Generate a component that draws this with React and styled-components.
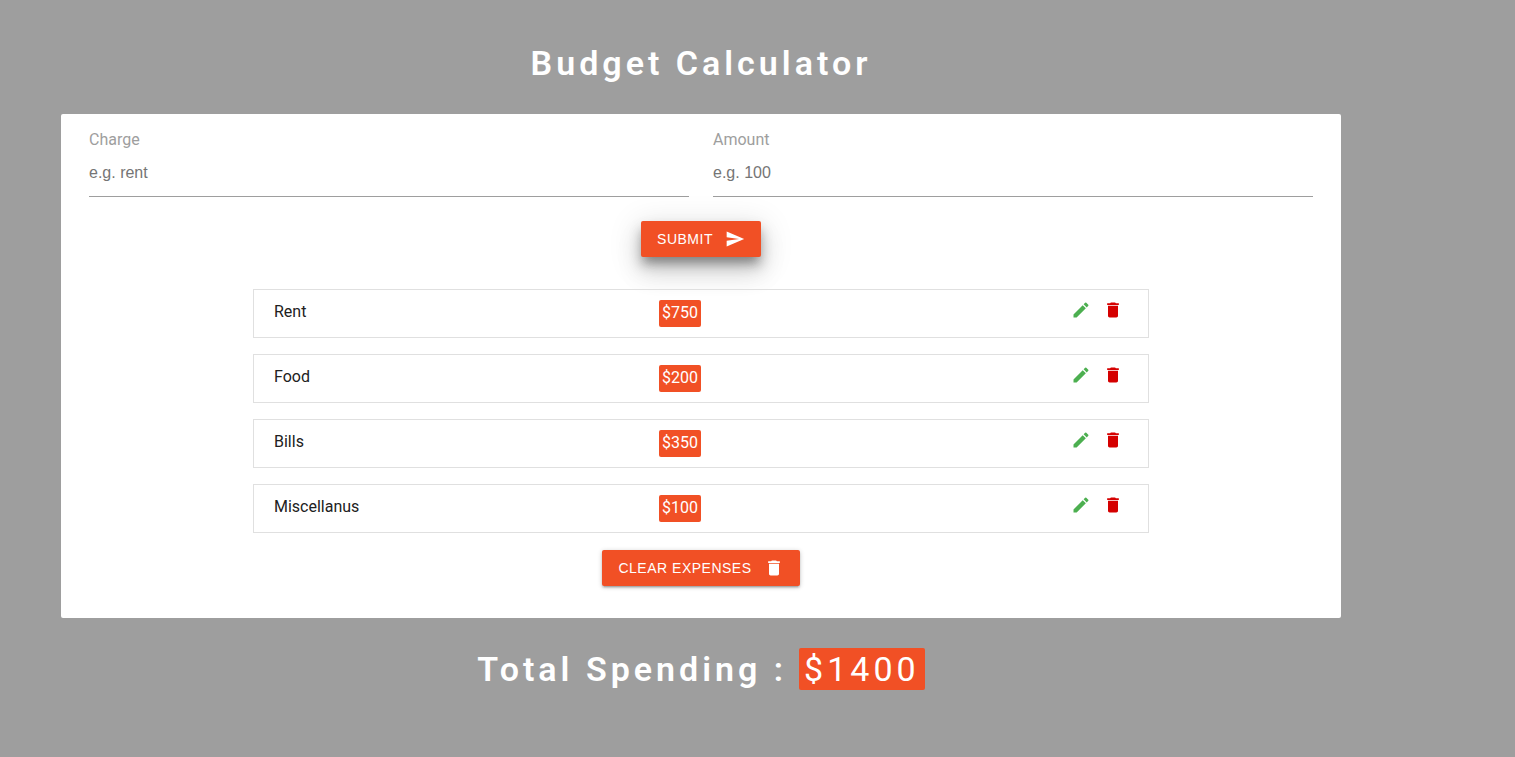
import React, { useState } from 'react';
import styled, { createGlobalStyle } from 'styled-components';
import { MdSend, MdEdit, MdDelete } from 'react-icons/md';

const GlobalStyle = createGlobalStyle`
* {
  box-sizing: border-box;
}
body {
  background: #9e9e9e;
  font-family: Roboto, "Liberation Sans", sans-serif;
  font-size: 16px;
  line-height: 24px;
  color: #212121;
  margin: 0;
}
`;

const Page = styled.div`
padding: 40px 113px 32px 0;
flex-direction: column;
align-items: center;
display: flex;
`;

const Title = styled.h1`
letter-spacing: 4px;
line-height: 46px;
font-weight: 600;
font-size: 34px;
color: #fff;
margin: 0 0 28px;
`;

const Total = styled(Title)`
align-items: center;
margin: 28px 0 0;
display: flex;
gap: 12px;
`;

const Card = styled.main`
padding: 14px 28px 32px;
flex-direction: column;
align-items: center;
background: #fff;
border-radius: 2px;
max-width: 1280px;
display: flex;
width: 100%;
`;

const Form = styled.form`
flex-direction: column;
align-items: center;
display: flex;
width: 100%;
gap: 24px;
`;

const Fields = styled.div`
grid-template-columns: 1fr 1fr;
display: grid;
width: 100%;
gap: 24px;
`;

const Field = styled.div`
flex-direction: column;
display: flex;
`;

const Label = styled.label`
color: #9e9e9e;
`;

const Input = styled.input`
font: 16px "Liberation Sans", Arial, sans-serif;
border: none;
border-bottom: 1px solid #9e9e9e;
background: transparent;
padding: 0 0 2px;
outline: none;
height: 45px;
width: 100%;
&::placeholder {
  color: #757575;
}
`;

const raised = `
0 16px 24px 2px rgba(0, 0, 0, .1),
0 6px 30px 5px rgba(0, 0, 0, .1),
0 8px 10px -5px rgba(0, 0, 0, .2),
0 8px 12px rgba(0, 0, 0, .26)
`;

const flat = `
0 2px 2px rgba(0, 0, 0, .14),
0 3px 1px -2px rgba(0, 0, 0, .12),
0 1px 5px rgba(0, 0, 0, .2)
`;

const Button = styled.button`
font: 14px "Liberation Sans", Arial, sans-serif;
box-shadow: ${props => (props.$raised ? raised : flat)};
text-transform: uppercase;
letter-spacing: .5px;
align-items: center;
background: #f15025;
border-radius: 2px;
padding: 0 16px;
cursor: pointer;
display: flex;
border: none;
height: 36px;
color: #fff;
gap: 12px;
`;

const List = styled.ul`
flex-direction: column;
list-style: none;
margin: 32px 0 17px;
display: flex;
padding: 0;
width: 896px;
max-width: 100%;
gap: 16px;
`;

const Item = styled.li`
grid-template-columns: minmax(0, 385px) 1fr;
border: 1px solid #e0e0e0;
padding: 10px 20px;
display: grid;
`;

const Details = styled.div`
justify-content: space-between;
align-items: flex-start;
display: flex;
`;

const Amount = styled.span`
background: #f15025;
border-radius: 2px;
line-height: 25px;
padding: 0 3px 2px;
color: #fff;
`;

const TotalAmount = styled.span`
background: #f15025;
border-radius: 2px;
line-height: 42px;
font-weight: normal;
padding: 0 5px;
`;

const Actions = styled.div`
padding-right: 5px;
display: flex;
gap: 12px;
`;

const IconButton = styled.button`
color: ${props => props.$color};
background: none;
cursor: pointer;
display: flex;
border: none;
padding: 0;
`;

const initialExpenses = [
  { id: 1, charge: 'Rent', amount: 750 },
  { id: 2, charge: 'Food', amount: 200 },
  { id: 3, charge: 'Bills', amount: 350 },
  { id: 4, charge: 'Miscellanus', amount: 100 },
];

const ExpenseItem = ({ expense: { charge, amount }, onEdit, onDelete }) => (
  <Item>
    <span>{charge}</span>
    <Details>
      <Amount>${amount}</Amount>
      <Actions>
        <IconButton type="button" $color="#4caf50" aria-label="edit" onClick={onEdit}>
          <MdEdit size={20} />
        </IconButton>
        <IconButton type="button" $color="#d50000" aria-label="delete" onClick={onDelete}>
          <MdDelete size={20} />
        </IconButton>
      </Actions>
    </Details>
  </Item>
);

const App = () => {
  const [expenses, setExpenses] = useState(initialExpenses);
  const [charge, setCharge] = useState('');
  const [amount, setAmount] = useState('');

  const remove = id => setExpenses(expenses.filter(item => item.id !== id));

  const edit = item => {
    setCharge(item.charge);
    setAmount(item.amount);
    remove(item.id);
  };

  const submit = e => {
    e.preventDefault();
    if (!charge || !(amount > 0)) return;
    setExpenses([...expenses, { id: Date.now(), charge, amount: Number(amount) }]);
    setCharge('');
    setAmount('');
  };

  return (
    <Page>
      <GlobalStyle />
      <Title>Budget Calculator</Title>
      <Card>
        {/* FORM */}
        <Form onSubmit={submit}>
          <Fields>
            <Field>
              <Label htmlFor="charge">Charge</Label>
              <Input
                id="charge"
                type="text"
                placeholder="e.g. rent"
                value={charge}
                onChange={e => setCharge(e.target.value)}
              />
            </Field>
            <Field>
              <Label htmlFor="amount">Amount</Label>
              <Input
                id="amount"
                type="number"
                placeholder="e.g. 100"
                value={amount}
                onChange={e => setAmount(e.target.value)}
              />
            </Field>
          </Fields>
          <Button type="submit" $raised>Submit<MdSend size={20} /></Button>
        </Form>
        {/* LIST */}
        <List>
          {expenses.map(item => (
            <ExpenseItem
              key={item.id}
              expense={item}
              onEdit={() => edit(item)}
              onDelete={() => remove(item.id)}
            />
          ))}
        </List>
        <Button type="button" onClick={() => setExpenses([])}>
          Clear expenses<MdDelete size={20} />
        </Button>
      </Card>
      {/* TOTAL */}
      <Total as="h2">
        Total Spending :
        <TotalAmount>
          ${expenses.reduce((sum, item) => sum + item.amount, 0)}
        </TotalAmount>
      </Total>
    </Page>
  );
};

export default App;
